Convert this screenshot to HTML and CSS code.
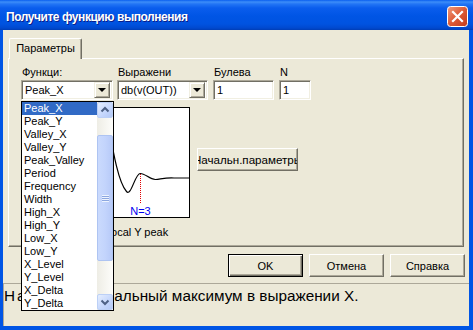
FILE: index.html
```html
<!DOCTYPE html>
<html lang="ru">
<head>
    <meta charset="UTF-8">
    <title>Получите функцию выполнения</title>
    <link rel="stylesheet" href="styles.css">
</head>
<body>
    <div class="window">
        <div class="titlebar">
            <span class="title">Получите функцию выполнения</span>
            <span class="close">
                <svg width="21" height="21" viewBox="0 0 21 21">
                    <defs>
                        <linearGradient id="cg" x1="0" y1="0" x2="1" y2="1">
                            <stop offset="0" stop-color="#F09C7E"/>
                            <stop offset="0.5" stop-color="#DD5A36"/>
                            <stop offset="1" stop-color="#C23A1A"/>
                        </linearGradient>
                    </defs>
                    <rect x="0.5" y="0.5" width="20" height="20" rx="3" fill="url(#cg)" stroke="#fff"/>
                    <path d="M6 6 L15 15 M15 6 L6 15" stroke="#fff" stroke-width="2.2" stroke-linecap="square"/>
                </svg>
            </span>
        </div>
        <div class="client">
            <div class="tabs">
                <div class="tab">Параметры</div>
            </div>
            <div class="panel">
                <div class="fields">
                    <div class="field f-func">
                        <label>Функци:</label>
                        <div class="combo"><span>Peak_X</span><span class="drop-btn"></span></div>
                    </div>
                    <div class="field f-expr">
                        <label>Выражени</label>
                        <div class="combo"><span>db(v(OUT))</span><span class="drop-btn"></span></div>
                    </div>
                    <div class="field f-bool">
                        <label>Булева</label>
                        <div class="combo"><span>1</span></div>
                    </div>
                    <div class="field f-n">
                        <label>N</label>
                        <div class="combo"><span>1</span></div>
                    </div>
                </div>
                <div class="body-row">
                    <div class="graph-col">
                        <div class="graph">
                            <svg width="83" height="109" viewBox="0 0 83 109">
                                <path d="M0 4 C4 22 10 72 20.5 83.5 C25 89 29 66 34 65.5 C39 65 44 72 49.7 71.5 C55 71 60 69.5 68 70 L83 70" fill="none" stroke="#000" stroke-width="1.2"/>
                                <line x1="34.5" y1="66" x2="34.5" y2="96" stroke="#E00000" stroke-dasharray="1 1"/>
                                <text x="34.5" y="106.5" text-anchor="middle" class="n-label">N=3</text>
                            </svg>
                        </div>
                        <div class="caption">Local Y peak</div>
                    </div>
                    <button class="params"><span>Начальн.параметры</span></button>
                </div>
            </div>
            <div class="buttons">
                <button class="btn default">OK</button>
                <button class="btn">Отмена</button>
                <button class="btn">Справка</button>
            </div>
            <div class="desc"><span class="desc-start">Находит лок</span>альный максимум в выражении X.</div>

            <div class="droplist">
                <ul class="items">
                    <li class="selected">Peak_X</li>
                    <li>Peak_Y</li>
                    <li>Valley_X</li>
                    <li>Valley_Y</li>
                    <li>Peak_Valley</li>
                    <li>Period</li>
                    <li>Frequency</li>
                    <li>Width</li>
                    <li>High_X</li>
                    <li>High_Y</li>
                    <li>Low_X</li>
                    <li>Low_Y</li>
                    <li>X_Level</li>
                    <li>Y_Level</li>
                    <li>X_Delta</li>
                    <li>Y_Delta</li>
                </ul>
                <div class="scrollbar">
                    <div class="sb-btn">
                        <svg width="14" height="14" viewBox="0 0 14 14"><path d="M3.5 8.5 L7 5 L10.5 8.5" fill="none" stroke="#4D6185" stroke-width="2"/></svg>
                    </div>
                    <div class="sb-thumb">
                        <div class="grip"></div>
                    </div>
                    <div class="sb-btn">
                        <svg width="14" height="14" viewBox="0 0 14 14"><path d="M3.5 5.5 L7 9 L10.5 5.5" fill="none" stroke="#4D6185" stroke-width="2"/></svg>
                    </div>
                </div>
            </div>
        </div>
    </div>
</body>
</html>
```

FILE: styles.css
```css
* {
    margin: 0;
    padding: 0;
    box-sizing: border-box;
}

body {
    background: #ECE9D8;
    font-family: "Liberation Sans", Arial, sans-serif;
    font-size: 11px;
    color: #000;
}

.window {
    width: 473px;
    height: 330px;
    background: #0055E5;
    display: flex;
    flex-direction: column;
}

.titlebar {
    height: 30px;
    display: flex;
    align-items: center;
    padding: 3px 5px 0 6px;
    background: linear-gradient(to bottom, #0A5FEF 0, #3D8EF8 2px, #2275F5 4px, #0A5DED 8px, #0055E5 16px, #0053E0 24px, #0049CF 28px, #003DB5 30px);
}

.title {
    flex: 1;
    color: #fff;
    font-weight: bold;
    font-size: 12px;
    letter-spacing: -0.45px;
    text-shadow: 1px 1px 0 #0A1E8A;
}

.close {
    width: 21px;
    height: 21px;
    display: block;
}

.close svg {
    display: block;
}

.client {
    flex: 1;
    margin: 0 4px 4px 3px;
    background: #ECE9D8;
    position: relative;
    display: flex;
    flex-direction: column;
}

/* tab strip */
.tabs {
    display: flex;
    padding: 8px 0 0 6px;
}

.tab {
    width: 73px;
    height: 21px;
    margin-bottom: -1px;
    background: #ECE9D8;
    border-left: 1px solid #fff;
    border-top: 1px solid #fff;
    border-right: 1px solid #716F64;
    box-shadow: inset -1px 0 0 #ACA899;
    border-radius: 2px 2px 0 0;
    text-align: center;
    line-height: 18px;
    position: relative;
    z-index: 1;
}

.panel {
    height: 189px;
    margin: 0 5px;
    border-left: 1px solid #fff;
    border-top: 1px solid #fff;
    border-right: 1px solid #716F64;
    border-bottom: 1px solid #716F64;
    box-shadow: inset -1px -1px 0 #ACA899;
}

.fields {
    display: flex;
    padding: 5px 0 0 12px;
}

.field label {
    display: block;
    height: 16px;
    line-height: 16px;
    padding-left: 1px;
}

.f-func { width: 92px; margin-right: 4px; }
.f-expr { width: 91px; margin-right: 5px; }
.f-bool { width: 61px; margin-right: 5px; }
.f-n { width: 32px; }

.combo {
    height: 20px;
    background: #fff;
    border: 1px solid;
    border-color: #ACA899 #fff #fff #ACA899;
    box-shadow: inset 1px 1px 0 #716F64, inset -1px -1px 0 #F1EFE2;
    display: flex;
    align-items: center;
    padding: 0 2px 0 3px;
    white-space: nowrap;
    overflow: hidden;
}

.combo span:first-child {
    flex: 1;
}

.drop-btn {
    width: 16px;
    height: 16px;
    background: #ECE9D8;
    border: 1px solid;
    border-color: #F1EFE2 #716F64 #716F64 #F1EFE2;
    box-shadow: inset 1px 1px 0 #fff, inset -1px -1px 0 #ACA899;
    position: relative;
}

.drop-btn::after {
    content: "";
    position: absolute;
    left: 3px;
    top: 5px;
    border-left: 4px solid transparent;
    border-right: 4px solid transparent;
    border-top: 4px solid #000;
}

.body-row {
    display: flex;
    margin: 7px 0 0 96px;
}

.graph {
    width: 85px;
    height: 111px;
    background: #fff;
    border: 1px solid #000;
}

.graph svg {
    display: block;
}

.n-label {
    font-family: "Liberation Sans", Arial, sans-serif;
    font-size: 11px;
    fill: #0000F0;
}

.caption {
    margin-top: 8px;
    line-height: 13px;
}

.params {
    width: 101px;
    height: 23px;
    margin: 41px 0 0 7px;
    background: #ECE9D8;
    border: 1px solid;
    border-color: #fff #716F64 #716F64 #fff;
    box-shadow: inset -1px -1px 0 #ACA899;
    font: 11.6px "Liberation Sans", Arial, sans-serif;
    display: flex;
    justify-content: center;
    align-items: center;
    overflow: hidden;
    white-space: nowrap;
}

.buttons {
    display: flex;
    justify-content: flex-end;
    gap: 6px;
    margin-top: 7px;
    padding-right: 4px;
}

.btn {
    width: 75px;
    height: 23px;
    background: #ECE9D8;
    border: 1px solid;
    border-color: #fff #716F64 #716F64 #fff;
    box-shadow: inset -1px -1px 0 #ACA899;
    font: 11px "Liberation Sans", Arial, sans-serif;
}

.btn.default {
    border: 1px solid #000;
    box-shadow: inset 1px 1px 0 #fff, inset -1px -1px 0 #716F64, inset -2px -2px 0 #ACA899;
}

.desc {
    flex: 1;
    margin-top: 6px;
    border-top: 1px solid #ACA899;
    border-left: 1px solid #ACA899;
    font-size: 15.3px;
    line-height: 18px;
    padding: 3px 0 0 0;
    white-space: nowrap;
}

/* the start of the line lies under the open list */
.desc-start {
    letter-spacing: 2px;
}

/* open dropdown of the first combo */
.droplist {
    position: absolute;
    left: 18px;
    top: 71px;
    width: 93px;
    height: 210px;
    border: 1px solid #000;
    background: #fff;
    display: flex;
    z-index: 5;
}

.items {
    list-style: none;
    flex: 1;
}

.items li {
    height: 13px;
    line-height: 13px;
    padding-left: 2px;
    white-space: nowrap;
}

.items li.selected {
    background: #316AC5;
    color: #fff;
}

.scrollbar {
    width: 16px;
    display: flex;
    flex-direction: column;
    justify-content: space-between;
    background: linear-gradient(to right, #EEEDE5, #FDFDFA);
}

.sb-btn {
    height: 16px;
    border: 1px solid #BCD0F6;
    border-radius: 2px;
    background: linear-gradient(135deg, #E5EEFE, #C4D6FC 60%, #B4C9F5);
    display: flex;
    align-items: center;
    justify-content: center;
}

.sb-thumb {
    height: 126px;
    margin: 17px 0 33px;
    border: 1px solid #AEC4F2;
    border-radius: 2px;
    background: linear-gradient(to right, #CADAFD, #C3D4FC 50%, #B7CAF8);
    display: flex;
    align-items: center;
    justify-content: center;
}

.grip {
    width: 7px;
    height: 7px;
    background: repeating-linear-gradient(to bottom, #EEF4FE 0, #EEF4FE 1px, #8CA7E0 1px, #8CA7E0 2px);
}
```
